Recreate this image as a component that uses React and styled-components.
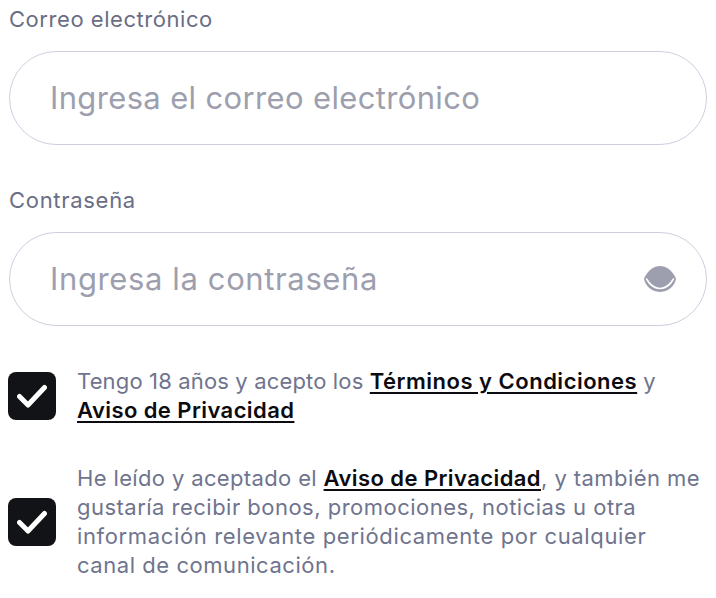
import React from 'react';
import styled, { createGlobalStyle } from 'styled-components';

const GlobalStyle = createGlobalStyle`
  html, body {
    margin: 0;
    padding: 0;
    background: #fff;
  }
  body {
    font-family: 'Inter', 'Liberation Sans', sans-serif;
  }
`;

function App() {
  return (
    <Page>
      <GlobalStyle />
      <Field $after={42}>
        <Label htmlFor="email" $track={0.55}>Correo electrónico</Label>
        <InputBox>
          <Input id="email" type="text" $track={0.35} placeholder="Ingresa el correo electrónico" />
        </InputBox>
      </Field>

      <Field $after={41}>
        <Label htmlFor="password" $track={0.7}>Contraseña</Label>
        <InputBox>
          <Input id="password" type="password" $track={0.62} placeholder="Ingresa la contraseña" />
          <EyeIcon />
        </InputBox>
      </Field>

      <Terms>
        <CheckRow>
          <CheckBox />
          <CheckText>
            <Line>
              <Run $track={0.15}>Tengo 18 años y acepto los </Run>
              <TextLink href="#" $track={0.5}>Términos y Condiciones</TextLink>
              <Run> y</Run>
            </Line>
            <Line>
              <TextLink href="#" $track={0.42}>Aviso de Privacidad</TextLink>
            </Line>
          </CheckText>
        </CheckRow>
        <CheckRow>
          <CheckBox />
          <CheckText>
            <Line>
              <Run $track={0.36}>He leído y aceptado el </Run>
              <TextLink href="#" $track={0.42}>Aviso de Privacidad</TextLink>
              <Run $track={0.43}>, y también me</Run>
            </Line>
            <Line><Run $track={0.48}>gustaría recibir bonos, promociones, noticias u otra</Run></Line>
            <Line><Run $track={0.64}>información relevante periódicamente por cualquier</Run></Line>
            <Line><Run $track={0.55}>canal de comunicación.</Run></Line>
          </CheckText>
        </CheckRow>
      </Terms>
    </Page>
  );
}

function CheckBox() {
  return (
    <Box>
      <svg width="30" height="26" viewBox="0 0 30 26" fill="none">
        <path d="M2.500 13.500 L11 22 L27.500 4.500" stroke="#fff" strokeWidth="5" strokeLinecap="round" strokeLinejoin="round" />
      </svg>
    </Box>
  );
}

function EyeIcon() {
  return (
    <EyeWrap>
      <svg width="34" height="30" viewBox="0 0 34 30">
        <path d="M1 14.5 C5 6 11 2 17 2 C23 2 29 6 33 14.5 C33 19 27 28 17 28 C7 28 1 19 1 14.5 Z" fill="#9d9fae" />
        <path d="M3.5 15 C7 21 11.500 24.500 17 24.500 C22.500 24.500 27 21 30.500 15" fill="none" stroke="#fff" strokeWidth="1.6" strokeLinecap="round" />
      </svg>
    </EyeWrap>
  );
}

export default App;

const Page = styled.div`
  width: 716px;
  height: 598px;
  box-sizing: border-box;
  padding: 6px 9px 0 8px;
  overflow: hidden;
`;

const Field = styled.div`
  display: flex;
  flex-direction: column;
  margin-bottom: ${(p) => p.$after}px;
`;

const Label = styled.label`
  font-size: 22px;
  line-height: 26px;
  letter-spacing: ${(p) => p.$track}px;
  margin-left: 1px;
  color: #6a6e85;
  margin-bottom: 19px;
`;

const InputBox = styled.div`
  position: relative;
  height: 94px;
  margin-left: 1px;
  box-sizing: border-box;
  border: 1px solid #cfcfe0;
  border-radius: 47px;
  display: flex;
  align-items: center;
  padding: 0 40px;
`;

const Input = styled.input`
  flex: 1;
  border: 0;
  outline: 0;
  padding: 0 0 2px;
  background: transparent;
  font-family: inherit;
  font-size: 31px;
  letter-spacing: ${(p) => p.$track}px;
  color: #30323f;
  &::placeholder {
    color: #9d9fae;
    opacity: 1;
  }
`;

const EyeWrap = styled.span`
  position: absolute;
  right: 29px;
  top: 31px;
  display: flex;
`;

const Terms = styled.div`
  display: flex;
  flex-direction: column;
  gap: 39px;
`;

const CheckRow = styled.div`
  display: flex;
  align-items: center;
  gap: 21px;
`;

const Box = styled.div`
  flex: none;
  width: 48px;
  height: 48px;
  border-radius: 8px;
  background: #121316;
  display: flex;
  align-items: center;
  justify-content: center;
`;

const CheckText = styled.p`
  margin: 0;
  font-size: 22px;
  line-height: 29px;
  color: #6f748e;
  white-space: pre;
`;

const Line = styled.span`
  display: block;
`;

const Run = styled.span`
  letter-spacing: ${(p) => p.$track || 0}px;
`;

const TextLink = styled.a`
  color: #0c0c10;
  font-weight: 600;
  letter-spacing: ${(p) => p.$track}px;
  text-decoration: underline;
  text-decoration-thickness: 2px;
  text-underline-offset: 3px;
`;
